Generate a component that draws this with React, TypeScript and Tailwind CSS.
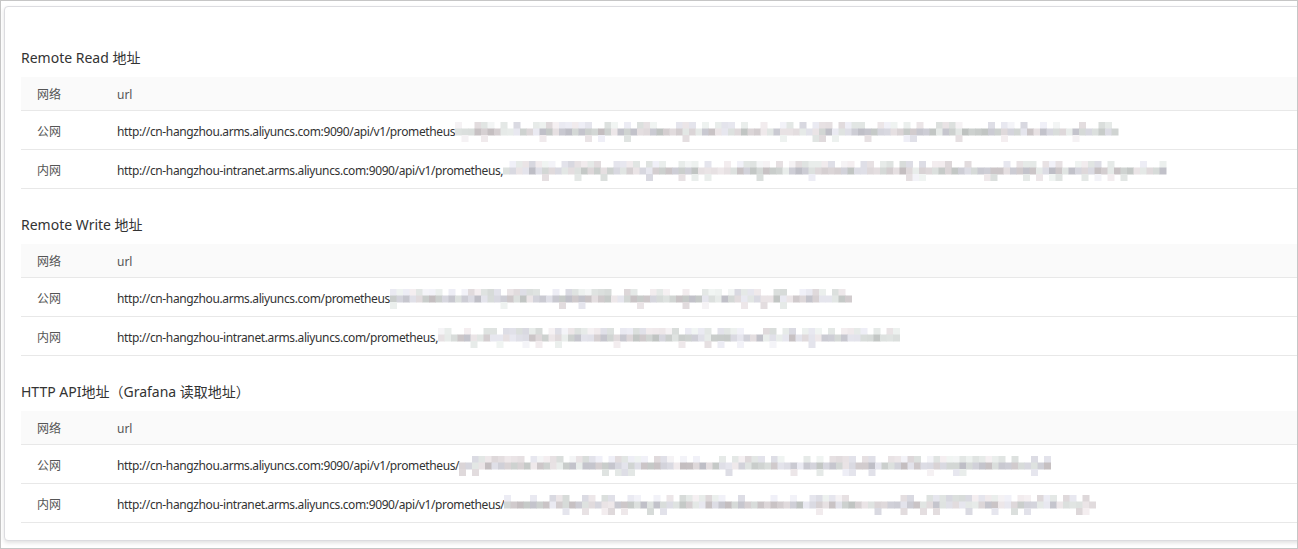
import React from "react";

function rand(seed: number) {
  let s = seed;
  return () => {
    s = (s * 9301 + 49297) % 233280;
    return s / 233280;
  };
}

function Blur({ width, seed }: { width: number; seed: number }) {
  const r = rand(seed);
  const size = 6.5;
  const cols = Math.floor(width / size);
  const rects: React.ReactElement[] = [];
  for (let row = 0; row < 3; row++) {
    for (let c = 0; c < cols; c++) {
      const v = r();
      if (row === 0 && v < 0.35) continue;
      if (row === 2 && v < 0.85) continue;
      const base = row === 1 ? 190 + Math.floor(r() * 45) : 215 + Math.floor(r() * 30);
      const tint = Math.floor(r() * 3);
      const rr = base + (tint === 0 ? 6 : 0);
      const gg = base + (tint === 1 ? 4 : 0);
      const bb = base + (tint === 2 ? 8 : 2);
      rects.push(
        <rect
          key={row + "-" + c}
          x={c * size}
          y={row * size}
          width={size + 0.5}
          height={size + 0.5}
          fill={`rgb(${Math.min(rr, 245)},${Math.min(gg, 245)},${Math.min(bb, 248)})`}
        />
      );
    }
  }
  return (
    <svg width={width} height={20} className="inline-block align-middle shrink-0" viewBox={`0 0 ${width} 20`}>
      {rects}
    </svg>
  );
}

type Row = { net: string; url: string; blur: number; seed: number };

function Section({ title, rows }: { title: string; rows: Row[] }) {
  return (
    <div>
      <div className="text-[14px] leading-[20px] text-[#333] mb-[9px]">{title}</div>
      <div className="w-full">
        <div className="flex h-[34px] pt-[2px] items-center bg-[#fafafa] border-b border-[#e8e8e8] text-[12px] text-[#555]">
          <div className="w-[96px] pl-[16px]">网络</div>
          <div>url</div>
        </div>
        {rows.map((r) => (
          <div key={r.url} className="flex h-[39px] pt-[3px] items-center border-b border-[#e8e8e8] text-[12px] text-[#333]">
            <div className="w-[96px] pl-[16px] text-[#555]">{r.net}</div>
            <div className="flex items-center whitespace-nowrap">
              <span className="tracking-[-0.38px]">{r.url}</span>
              <Blur width={r.blur} seed={r.seed} />
            </div>
          </div>
        ))}
      </div>
    </div>
  );
}

export default function App() {
  return (
    <div
      className="w-[1298px] h-[549px] border border-[#c6c6c6] bg-white overflow-hidden pl-[3px] pt-[5px]"
      style={{ fontFamily: '"Noto Sans", "Noto Sans CJK SC", sans-serif' }}
    >
      <div className="w-[1300px] h-[535px] bg-white border border-[#dcdce0] rounded-[4px] shadow-[0_2px_4px_rgba(0,0,0,0.12)] pl-[16px] pt-[41px] flex flex-col gap-[26px]">
        <Section
          title="Remote Read 地址"
          rows={[
            { net: "公网", url: "http://cn-hangzhou.arms.aliyuncs.com:9090/api/v1/prometheus", blur: 665, seed: 11 },
            { net: "内网", url: "http://cn-hangzhou-intranet.arms.aliyuncs.com:9090/api/v1/prometheus,", blur: 666, seed: 23 },
          ]}
        />
        <Section
          title="Remote Write 地址"
          rows={[
            { net: "公网", url: "http://cn-hangzhou.arms.aliyuncs.com/prometheus", blur: 462, seed: 37 },
            { net: "内网", url: "http://cn-hangzhou-intranet.arms.aliyuncs.com/prometheus,", blur: 462, seed: 41 },
          ]}
        />
        <Section
          title="HTTP API地址（Grafana 读取地址）"
          rows={[
            { net: "公网", url: "http://cn-hangzhou.arms.aliyuncs.com:9090/api/v1/prometheus/", blur: 595, seed: 53 },
            { net: "内网", url: "http://cn-hangzhou-intranet.arms.aliyuncs.com:9090/api/v1/prometheus/", blur: 597, seed: 67 },
          ]}
        />
      </div>
    </div>
  );
}
